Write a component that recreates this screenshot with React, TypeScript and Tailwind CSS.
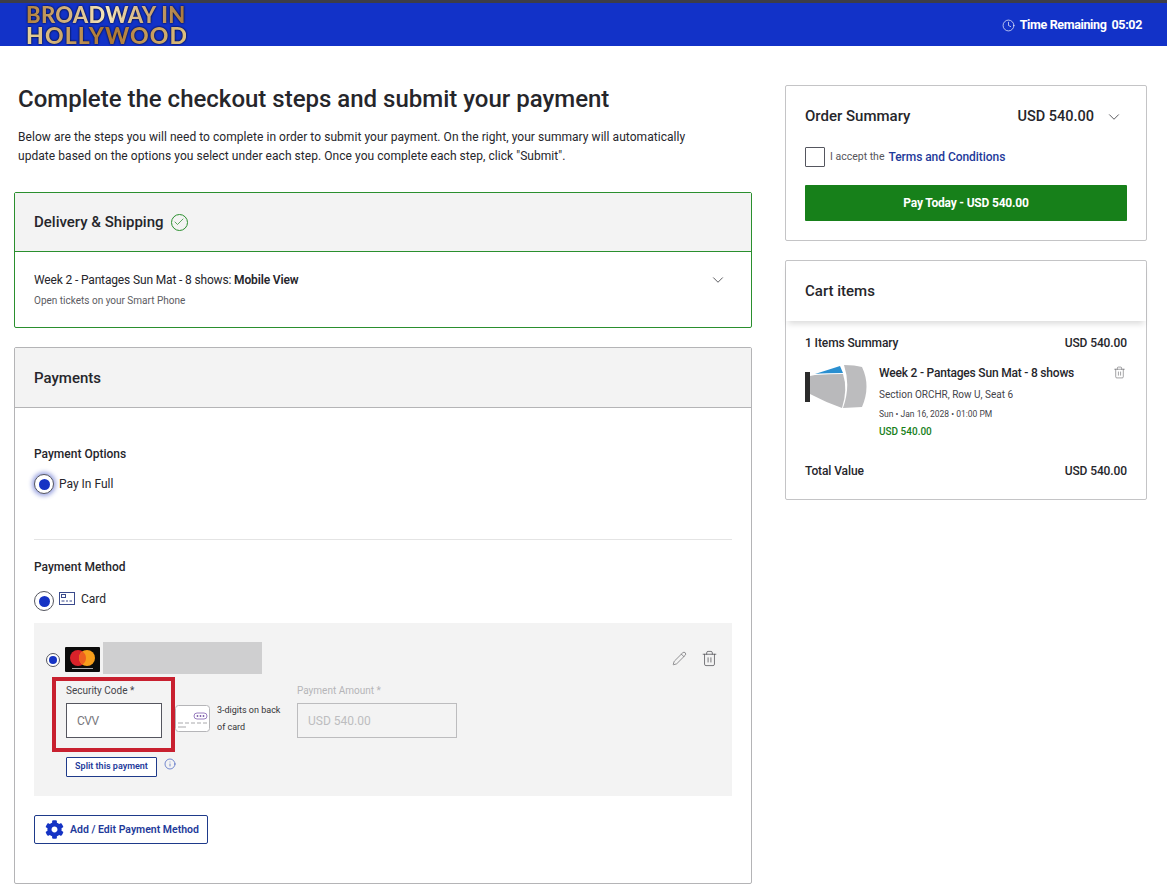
import React from 'react'
import { ChevronDown, Check, Clock, Info, Pencil, Trash2 } from 'lucide-react'
import { FaCog } from 'react-icons/fa'

const Radio = ({ focused = false, small = false }: { focused?: boolean; small?: boolean }) => (
  <span
    className={`flex shrink-0 items-center justify-center rounded-full border border-[#55565f] bg-white ${
      small ? 'h-[14px] w-[14px]' : 'h-[20px] w-[20px]'
    } ${focused ? 'shadow-[0_0_4px_2px_rgba(40,60,190,0.45)]' : ''}`}
  >
    <span className={`rounded-full bg-[#1533c4] ${small ? 'h-[8px] w-[8px]' : 'h-[11px] w-[11px]'}`} />
  </span>
)

const SeatMap = () => (
  <svg width="64" height="46" viewBox="0 0 64 46">
    <rect x="0" y="8" width="5" height="30" fill="#2b2b2b" />
    <path d="M5 12 L10 11 Q24 10 38 10 Q43 25 37 44 Q20 38 5 30 Z" fill="#b9b9bb" />
    <path d="M10 10 L35 2 L38 9 Q20 9 10 10 Z" fill="#2a8fd0" />
    <path d="M39 1 Q50 1 57 3 Q66 22 57 43 L38 44 Q46 22 39 1 Z" fill="#bcbcbe" />
  </svg>
)

const MasterCard = () => (
  <svg width="35" height="25" viewBox="0 0 35 25" className="shrink-0">
    <rect width="35" height="25" rx="1" fill="#0b0b0b" />
    <circle cx="13" cy="11" r="8" fill="#d9222a" />
    <circle cx="22" cy="11" r="8" fill="#f79e1b" />
    <path d="M17.5 4.4a8 8 0 0 1 0 13.2a8 8 0 0 1 0-13.2z" fill="#ee5f20" />
    <rect x="7" y="21" width="21" height="1" fill="#aaa" />
  </svg>
)

const CvvCard = () => (
  <svg width="35" height="27" viewBox="0 0 35 27" className="shrink-0">
    <rect x="0.5" y="0.5" width="34" height="26" rx="3" fill="#fff" stroke="#b5b5b8" />
    <rect x="19" y="8" width="13" height="6" rx="3" fill="#fff" stroke="#9a7fc0" />
    <circle cx="22.5" cy="11" r="0.9" fill="#7a5aa8" />
    <circle cx="25.5" cy="11" r="0.9" fill="#7a5aa8" />
    <circle cx="28.5" cy="11" r="0.9" fill="#7a5aa8" />
    <path d="M3 18h5M10 18h4M16 18h4M22 18h4M28 18h4M3 22h8" stroke="#a9a9ac" strokeWidth="1" />
  </svg>
)

const SmallCard = () => (
  <svg width="16" height="13" viewBox="0 0 16 13" className="shrink-0">
    <rect x="0.5" y="0.5" width="15" height="12" fill="none" stroke="#3a4a8c" />
    <rect x="2.5" y="2.5" width="4" height="3" fill="none" stroke="#3a4a8c" />
    <path d="M2.5 9h3M7 9h2M10.5 9h2.5" stroke="#3a4a8c" />
  </svg>
)

export default function App() {
  return (
    <div className="min-h-[893px] bg-white font-['Roboto',sans-serif] text-[#26262b]">
      {/* Header */}
      <header className="flex h-[46px] items-center justify-between border-t-[3px] border-[#3d3d47] bg-[#1232c8] pl-[26px] pr-[25px]">
        <div className="font-['Lato',sans-serif] font-black drop-shadow-[0_0_1px_#000]">
          <div className="w-[160px] bg-gradient-to-r from-[#b07f3c] via-[#f5e6bb] to-[#a9773a] bg-clip-text text-[22px] leading-[20px] tracking-[0.3px] text-transparent">
            BROADWAY IN
          </div>
          <div className="w-[160px] bg-gradient-to-r from-[#e8d49c] via-[#a9722f] to-[#dcc081] bg-clip-text text-[23px] leading-[20px] tracking-[1.1px] text-transparent">
            HOLLYWOOD
          </div>
        </div>
        <div className="mt-px flex items-center text-[12.5px] font-bold tracking-[-0.35px] text-white">
          <Clock size={13} strokeWidth={1.25} className="mr-[5px]" />
          <span>Time Remaining</span>
          <span className="ml-[5px]">05:02</span>
        </div>
      </header>

      <div className="flex items-start pl-[14px]">
        {/* Left column */}
        <main className="w-[738px] shrink-0">
          <h1 className="mt-[36px] pl-[4px] text-[24px] font-medium leading-[34px]">
            Complete the checkout steps and submit your payment
          </h1>
          <p className="mt-[12px] w-[700px] pl-[4px] text-[12px] leading-[19px] tracking-[0.05px]">
            Below are the steps you will need to complete in order to submit your payment. On the right, your summary will automatically update based on the options you select under each step. Once you complete each step, click "Submit".
          </p>

          <section className="mt-[26px] h-[136px] rounded-[2px] border border-[#2a8f2e]">
            <div className="flex h-[59px] items-center border-b border-[#2a8f2e] bg-[#f3f3f3] px-[19px]">
              <h2 className="text-[15px] font-medium">Delivery &amp; Shipping</h2>
              <span className="ml-[7px] flex h-[17px] w-[17px] items-center justify-center rounded-full border border-[#2a8f2e]">
                <Check size={12} strokeWidth={1.5} className="text-[#2a8f2e]" />
              </span>
            </div>
            <div className="flex items-start justify-between pl-[19px] pr-[24px] pt-[19px]">
              <div>
                <div className="text-[12px] leading-[18px] tracking-[-0.15px]">
                  Week 2 - Pantages Sun Mat - 8 shows: <span className="font-semibold">Mobile View</span>
                </div>
                <div className="mt-[5px] text-[10px] leading-[14px] text-[#5c5c62]">Open tickets on your Smart Phone</div>
              </div>
              <ChevronDown size={18} strokeWidth={1} />
            </div>
          </section>

          <section className="mt-[19px] h-[537px] rounded-[2px] border border-[#b4b4b6]">
            <div className="flex h-[60px] items-center border-b border-[#b4b4b6] bg-[#f3f3f3] px-[19px] pt-[2px]">
              <h2 className="text-[15px] font-medium">Payments</h2>
            </div>
            <div className="px-[19px] pt-[37px]">
              <div className="text-[12px] font-medium leading-[18px]">Payment Options</div>
              <div className="mt-[11px] flex items-center">
                <Radio focused />
                <span className="ml-[5px] text-[12px] leading-[18px]">Pay In Full</span>
              </div>
              <div className="mt-[45px] border-t border-[#e4e4e4]" />
              <div className="mt-[18px] text-[12px] font-medium leading-[18px]">Payment Method</div>
              <div className="mt-[13px] flex items-start">
                <span className="mt-[2px]"><Radio /></span>
                <span className="ml-[5px] mt-[3px]"><SmallCard /></span>
                <span className="ml-[6px] mt-[2px] text-[12px] leading-[16px]">Card</span>
              </div>

              {/* Saved card */}
              <div className="mt-[12px] h-[173px] bg-[#f3f3f3] pt-[19px]">
                <div className="flex items-center pl-[12px] pr-[14px]">
                  <span className="mt-[4px]"><Radio small /></span>
                  <span className="ml-[5px] mt-[3px] flex"><MasterCard /></span>
                  <div className="ml-[3px] h-[32px] w-[159px] bg-[#cfcfd0]" />
                  <div className="ml-auto flex items-center gap-[14px] text-[#55555a]">
                    <Pencil size={15} strokeWidth={1} />
                    <Trash2 size={17} strokeWidth={1.1} />
                  </div>
                </div>
                <div className="mt-[3px] flex items-start pl-[18px]">
                  <div className="h-[75px] w-[123px] border-[4px] border-[#c8202f] pl-[10px] pt-[3px]">
                    <div className="text-[10px] leading-[14px] text-[#44444a]">Security Code *</div>
                    <div className="mt-[5px] flex h-[35px] w-[96px] items-center border border-[#55565f] bg-white pl-[10px] text-[12px] tracking-[-0.5px] text-[#77777c]">
                      CVV
                    </div>
                  </div>
                  <div className="mt-[28px]"><CvvCard /></div>
                  <div className="ml-[7px] mt-[25px] w-[70px] text-[9px] leading-[17px] text-[#333338]">3-digits on back of card</div>
                  <div className="ml-[10px] pt-[7px]">
                    <div className="text-[10px] leading-[14px] text-[#b5b5b8]">Payment Amount *</div>
                    <div className="mt-[5px] flex h-[35px] w-[160px] items-center border border-[#bcbcbe] pl-[10px] text-[12px] text-[#bdbdc0]">
                      USD 540.00
                    </div>
                  </div>
                </div>
                <div className="mt-[5px] flex items-start pl-[32px]">
                  <button className="h-[20px] w-[91px] rounded-[1px] border border-[#1e3a8a] bg-white text-[9px] font-semibold text-[#1e3a9a]">
                    Split this payment
                  </button>
                  <Info size={12} strokeWidth={1.25} className="ml-[7px] mt-px text-[#2a4ab8]" />
                </div>
              </div>

              <button className="mt-[19px] flex h-[29px] w-[174px] items-center rounded-[2px] border border-[#1e3a8a] pl-[10px] text-[10.5px] font-semibold text-[#1e3a9a]">
                <FaCog size={19} className="mr-[6px] text-[#1533c4]" />
                Add / Edit Payment Method
              </button>
            </div>
          </section>
        </main>

        {/* Right column */}
        <aside className="ml-[33px] mt-[39px] w-[362px] shrink-0">
          <section className="h-[156px] rounded-[2px] border border-[#c4c4c6] px-[19px] pt-[19px]">
            <div className="flex items-center justify-between">
              <h2 className="text-[15px] font-medium leading-[22px]">Order Summary</h2>
              <div className="flex items-center">
                <span className="pt-[2px] text-[14.5px] font-medium leading-[20px]">USD 540.00</span>
                <ChevronDown size={18} strokeWidth={1} className="ml-[11px] mr-[4px] mt-[2px]" />
              </div>
            </div>
            <div className="mt-[20px] flex items-center">
              <span className="h-[20px] w-[20px] rounded-[1px] border border-[#55565f]" />
              <span className="ml-[5px] text-[10.5px] text-[#55555a]">I accept the</span>
              <span className="ml-[4px] text-[12px] font-medium tracking-[-0.05px] text-[#1e3a9a]">Terms and Conditions</span>
            </div>
            <button className="mt-[18px] h-[36px] w-[322px] rounded-[1px] bg-[#17801a] text-[12px] font-bold tracking-[-0.2px] text-white">
              Pay Today - USD 540.00
            </button>
          </section>

          <section className="mt-[19px] h-[240px] rounded-[2px] border border-[#c4c4c6]">
            <div className="flex h-[60px] items-center px-[19px] shadow-[0_5px_6px_-2px_rgba(0,0,0,0.14)]">
              <h2 className="text-[15px] font-medium">Cart items</h2>
            </div>
            <div className="px-[19px] pt-[13px]">
              <div className="flex justify-between text-[12px] font-medium leading-[18px] tracking-[-0.1px]">
                <span>1 Items Summary</span>
                <span>USD 540.00</span>
              </div>
              <div className="mt-[12px] flex items-start">
                <div className="w-[74px] shrink-0"><SeatMap /></div>
                <div className="flex-1">
                  <div className="flex justify-between">
                    <span className="text-[12px] font-medium leading-[18px] tracking-[-0.2px]">Week 2 - Pantages Sun Mat - 8 shows</span>
                    <Trash2 size={13} strokeWidth={1} className="mr-px mt-[2px] text-[#55555a]" />
                  </div>
                  <div className="mt-[6px] text-[10px] leading-[14px] text-[#44444a]">Section ORCHR, Row U, Seat 6</div>
                  <div className="mt-[6px] text-[8.5px] leading-[13px] text-[#44444a]">Sun • Jan 16, 2028 • 01:00 PM</div>
                  <div className="mt-[4px] text-[10px] font-medium leading-[14px] text-[#17801a]">USD 540.00</div>
                </div>
              </div>
              <div className="mt-[23px] flex justify-between text-[12px] font-medium leading-[18px] tracking-[-0.1px]">
                <span>Total Value</span>
                <span>USD 540.00</span>
              </div>
            </div>
          </section>
        </aside>
      </div>
    </div>
  )
}
